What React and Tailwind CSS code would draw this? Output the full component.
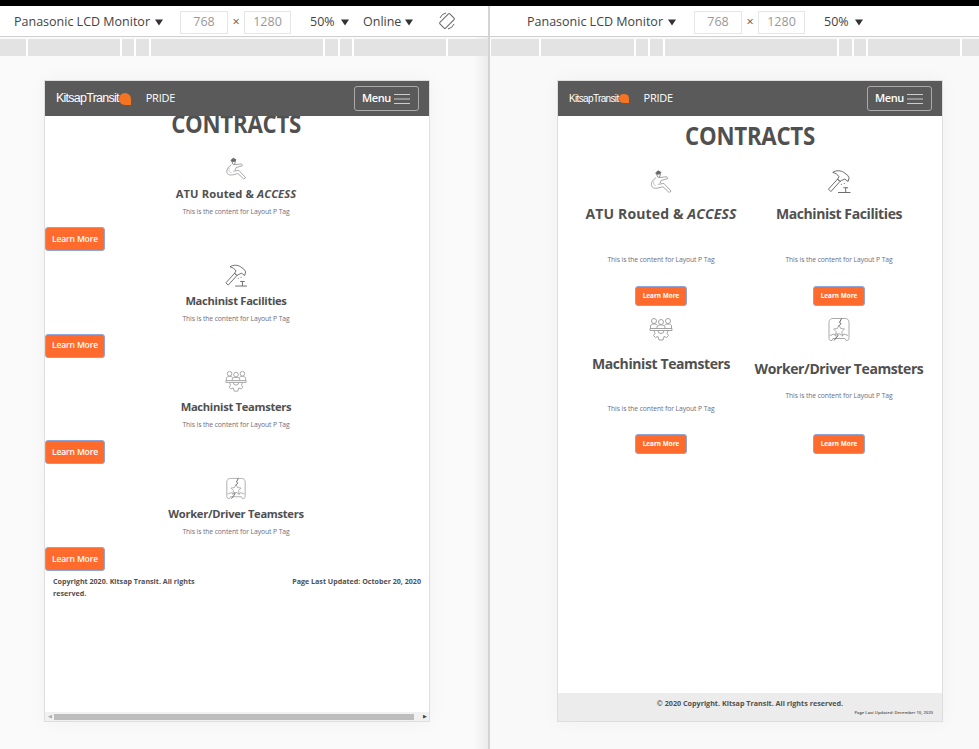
import React from "react";

const font = { fontFamily: '"Open Sans", "Noto Sans", sans-serif' };

function Caret() {
  return <svg width="8" height="7" viewBox="0 0 9 7" className="shrink-0"><path d="M0 0h9L4.5 7z" fill="#333" /></svg>;
}

function DriverIcon({ className }) {
  return (
    <svg viewBox="0 0 24 24" className={className} fill="none" stroke="#999" strokeWidth="0.9">
      <path d="M6.5 3 L9 0.8 L12 2.5 L11 4 L7.5 4.5 Z" fill="#666" stroke="#666" />
      <path d="M8 4.5 C7.5 7 9 8 10.5 7.5 L11.5 4" stroke="#777" />
      <path d="M7 8 C3.5 10 1.5 13 2 16 C2.5 18.5 5 19.5 8 19 L14 17.5 L20.5 23.5 L22.5 22 L15 14 L9 15" />
      <path d="M10 8 L18 7 L19 9 L12 11 L11 14" />
      <path d="M5 11 C3.5 13.5 4 16 7 16.5" stroke="#bbb" />
    </svg>
  );
}
function HammerIcon({ className }) {
  return (
    <svg viewBox="0 0 24 24" className={className} fill="none" stroke="#555" strokeWidth="0.9">
      <path d="M1 20 L3.5 22.5 L13 12 L10.5 9.5 Z" />
      <path d="M5.5 2.5 C9 0 14 0.5 17 2.5 L21 5.5 L22.5 8 L21.5 12 L18 9.5 L14.5 11 L13 12 L10.5 9.5 L12 7 C10.5 4.5 8.5 3.5 5.5 2.5 Z" />
      <path d="M11 23.5 L24 23.5 M19 23.5 L19 18.5 M16.5 18.5 L21.5 18.5" />
      <path d="M14 15 h1 M17 14 h1" />
    </svg>
  );
}
function TeamIcon({ className }) {
  return (
    <svg viewBox="0 0 24 24" className={className} fill="none" stroke="#999" strokeWidth="0.9">
      <circle cx="5" cy="3.5" r="2.5" /><circle cx="12" cy="4.5" r="2.5" /><circle cx="19" cy="3.5" r="2.5" />
      <path d="M1.5 11 V8.5 C1.5 7 3 6.5 5 6.5 C7 6.5 8 7 8.5 8 M22.5 11 V8.5 C22.5 7 21 6.5 19 6.5 C17 6.5 16 7 15.5 8 M8 11 V9.5 C8 8 10 7.5 12 7.5 C14 7.5 16 8 16 9.5 V11" />
      <path d="M1 11 H23 V13 H1 Z" />
      <path d="M5 13 L6 16 L4.5 18 L6.5 20 L9 19 L10 22.5 H14 L15 19 L17.5 20 L19.5 18 L18 16 L19 13" />
      <path d="M9 13 A3 3 0 0 0 15 13" />
    </svg>
  );
}
function BusIcon({ className }) {
  return (
    <svg viewBox="0 0 24 24" className={className} fill="none" stroke="#a0a0a0" strokeWidth="0.9">
      <path d="M2 21 V5 C2 2 4 1 6 1 H18 C20 1 22 2 22 5 V21 C22 23 20 23 19 23 L18 21 H6 L5 23 C4 23 2 23 2 21 Z" />
      <path d="M14.5 1 L12.5 5 L14 6 L11.5 9 M10 16 L11 18 L7 23" stroke="#555" />
      <path d="M12 7.5 L13.7 11 L17.5 11.5 L14.8 14.2 L15.5 18 L12 16.2 L8.5 18 L9.2 14.2 L6.5 11.5 L10.3 11 Z" />
      <path d="M3 18 L7 16.5 L9 19 M21 18 L17 16.5 L15 19" />
    </svg>
  );
}

function Toolbar({ online, indent, firstInput }) {
  return (
    <div className="h-[31px] pt-[2px] flex items-center border-b border-[#cfcfcf] bg-white text-[12.5px] text-[#444]" style={{ paddingLeft: indent }}>
      <span className="w-[135px] whitespace-nowrap">Panasonic LCD Monitor</span>
      <span className="ml-[6px]"><Caret /></span>
      <div className={`${firstInput} w-[48px] h-[23px] flex items-center justify-center border border-[#e6e6e6] text-[#999]`}>768</div>
      <span className="w-[16px] text-center text-[#555]">×</span>
      <div className="w-[47px] h-[23px] flex items-center justify-center border border-[#e6e6e6] text-[#999]">1280</div>
      <span className="ml-[19px] w-[25px]">50%</span>
      <span className="ml-[6px]"><Caret /></span>
      {online && (
        <>
          <span className="ml-[14px] w-[37px]">Online</span>
          <span className="ml-[5px]"><Caret /></span>
          <svg width="18" height="18" viewBox="0 0 18 18" className="ml-[25px] -mt-[2px]" fill="none" stroke="#666" strokeWidth="1">
            <rect x="5" y="2" width="8" height="14" rx="1" transform="rotate(45 9 9)" />
            <path d="M2 6 A8 8 0 0 1 8 1 M16 12 A8 8 0 0 1 10 17" />
          </svg>
        </>
      )}
    </div>
  );
}

function Ruler({ segs, first }) {
  return (
    <div className={`mt-[2px] h-[17px] flex gap-[2px] overflow-hidden bg-white ${first}`}>
      {segs.map((w, i) => <div key={i} className="h-full bg-[#e3e3e3] shrink-0" style={{ width: w }} />)}
    </div>
  );
}

function Header({ logoClass, prideGap, blob }) {
  return (
    <header className="relative z-10 h-[35px] shrink-0 bg-[#5a5a5a] flex items-center pl-[11px] pr-[10px] text-white">
      <span className={`${logoClass} font-light whitespace-nowrap`} style={{ fontFamily: '"Liberation Sans", sans-serif' }}>KitsapTransit</span>
      <span className={`${blob} bg-[#f47421] rounded-full rounded-br-none shrink-0`} />
      <span className={`${prideGap} text-[11px] tracking-[-0.25px]`}>PRIDE</span>
      <div className="ml-auto w-[65px] h-[25px] border border-[#aaa] rounded-[3px] flex items-center pl-[7px]">
        <span className="w-[27px] text-[11px] font-semibold tracking-[-0.4px]">Menu</span>
        <svg width="16" height="12" viewBox="0 0 16 12" className="ml-[5px]" stroke="#ccc" strokeWidth="1"><path d="M0 1.5h16M0 6h16M0 10.5h16" /></svg>
      </div>
    </header>
  );
}

function Frame({ children, mx }) {
  return (
    <div className={`${mx} mt-[24px] w-[386px] h-[642px] bg-white border border-[#dedede] flex flex-col overflow-hidden shadow-[0_0_18px_rgba(0,0,0,0.04)]`}>
      {children}
    </div>
  );
}

const Para = ({ className = "" }) => (
  <p className={`text-[6.8px] leading-[10px] text-[#6e6e7e] tracking-[-0.1px] whitespace-nowrap ${className}`}>This is the content for Layout P Tag</p>
);

const items = [
  { Icon: DriverIcon, wide: true, title: <>ATU Routed &amp; <em>ACCESS</em></> },
  { Icon: HammerIcon, title: "Machinist Facilities" },
  { Icon: TeamIcon, title: "Machinist Teamsters" },
  { Icon: BusIcon, title: "Worker/Driver Teamsters" },
];

function Stacked({ Icon, title, wide }) {
  return (
    <section className="h-[106.67px] pt-[9px]">
      <div className="flex flex-col items-center pr-[2px]">
        <Icon className="w-[22px] h-[23px]" />
        <h2 className={`mt-[7px] h-[14px] leading-[14px] text-[11.2px] font-bold text-[#505050] whitespace-nowrap ${wide ? "tracking-[0.01em]" : "tracking-[-0.3px]"}`}>{title}</h2>
        <Para className="mt-[6px]" />
      </div>
      <button className="block mt-[10px] w-[60px] h-[24px] bg-[#ff6b2c] border border-[#8ea5d8] rounded-[3px] text-white text-[8.6px] font-semibold tracking-[-0.2px]">Learn More</button>
    </section>
  );
}

function Small({ Icon, title, wide, iconH, titleTop, paraTop, btnTop }) {
  return (
    <div className="flex flex-col items-center">
      <Icon className={`w-[24px] ${iconH}`} />
      <h2 className={`${titleTop} text-[14px] leading-[18px] font-bold text-[#505050] whitespace-nowrap ${wide ? "tracking-[0.01em]" : "tracking-[-0.4px]"}`}>{title}</h2>
      <Para className={paraTop} />
      <button className={`${btnTop} w-[52px] h-[20px] bg-[#ff6b2c] border border-[#8ea5d8] rounded-[3px] text-white text-[6.4px] font-bold`}>Learn More</button>
    </div>
  );
}

export default function App() {
  return (
    <div className="w-[979px] h-[749px] overflow-hidden bg-[#f9f9f9] flex flex-col" style={font}>
      <div className="h-[6px] bg-black shrink-0" />
      <div className="flex flex-1 min-h-0">
        {/* left pane */}
        <div className="w-[488px] shrink-0 flex flex-col bg-gradient-to-r from-[#fafafa] from-[97%] to-[#ececec]">
          <Toolbar online indent="14px" firstInput="ml-[17px]" />
          <Ruler segs={[26, 92, 12, 13, 172, 13, 12, 92, 40]} first="" />
          <Frame mx="ml-[44px]">
            <Header logoClass="text-[12.5px] tracking-[-0.75px]" blob="w-[12px] h-[12px]" prideGap="ml-[15px]" />
            <div className="flex-1 min-h-0 flex flex-col">
              <h1 className="-mt-[11px] h-[36px] leading-[36px] text-center text-[25px] font-bold text-[#505050] pr-[2px] tracking-[-0.3px] scale-x-[0.89]">CONTRACTS</h1>
              <div className="mt-[7px]">
                {items.map((it, i) => <Stacked key={i} {...it} />)}
              </div>
              <footer className="px-[8px] flex justify-between text-[7.12px] leading-[12px] font-bold text-[#505050]">
                <p className="w-[160px]">Copyright 2020. Kitsap Transit. All rights reserved.</p>
                <p className="whitespace-nowrap">Page Last Updated: October 20, 2020</p>
              </footer>
            </div>
            <div className="h-[9px] bg-[#f1f1f1] flex items-center shrink-0">
              <span className="w-[9px] text-center text-[5px] text-[#aaa]">◀</span>
              <div className="w-[360px] h-[6px] bg-[#bdbdbd]" />
              <span className="ml-auto w-[9px] text-center text-[5px] text-[#444]">▶</span>
            </div>
          </Frame>
        </div>

        <div className="w-[2px] shrink-0 bg-[#d4d4d4]" />

        {/* right pane */}
        <div className="flex-1 flex flex-col">
          <Toolbar indent="37px" firstInput="ml-[18px]" />
          <Ruler segs={[48, 93, 12, 13, 172, 13, 12, 92, 40]} first="pl-px" />
          <Frame mx="ml-[67px]">
            <Header logoClass="text-[10px] tracking-[-0.65px]" blob="w-[10px] h-[9px]" prideGap="ml-[15px]" />
            <div className="flex-1 min-h-0 flex flex-col">
              <h1 className="mt-[1px] h-[36px] leading-[36px] text-center text-[25px] font-bold text-[#505050] tracking-[-0.3px] scale-x-[0.89]">CONTRACTS</h1>
              <div className="mt-[17px] grid grid-cols-2 px-[14px] gap-y-[11px]">
                <Small {...items[0]} iconH="h-[23px]" titleTop="mt-[12px]" paraTop="mt-[32px]" btnTop="mt-[21px]" />
                <Small {...items[1]} iconH="h-[23px]" titleTop="mt-[12px]" paraTop="mt-[32px]" btnTop="mt-[21px]" />
                <Small {...items[2]} iconH="h-[25px]" titleTop="mt-[13px]" paraTop="mt-[31px]" btnTop="mt-[20px]" />
                <Small {...items[3]} iconH="h-[25px]" titleTop="mt-[18px]" paraTop="mt-[13px]" btnTop="mt-[33px]" />
              </div>
            </div>
            <footer className="h-[28px] bg-[#ececec] shrink-0">
              <p className="pt-[4px] text-center text-[7.2px] leading-[12px] font-bold text-[#505050]">© 2020 Copyright. Kitsap Transit. All rights reserved.</p>
              <p className="text-right pr-[9px] text-[4.2px] leading-[7px] font-semibold text-[#505050]">Page Last Updated: December 10, 2020</p>
            </footer>
          </Frame>
        </div>
      </div>
    </div>
  );
}
